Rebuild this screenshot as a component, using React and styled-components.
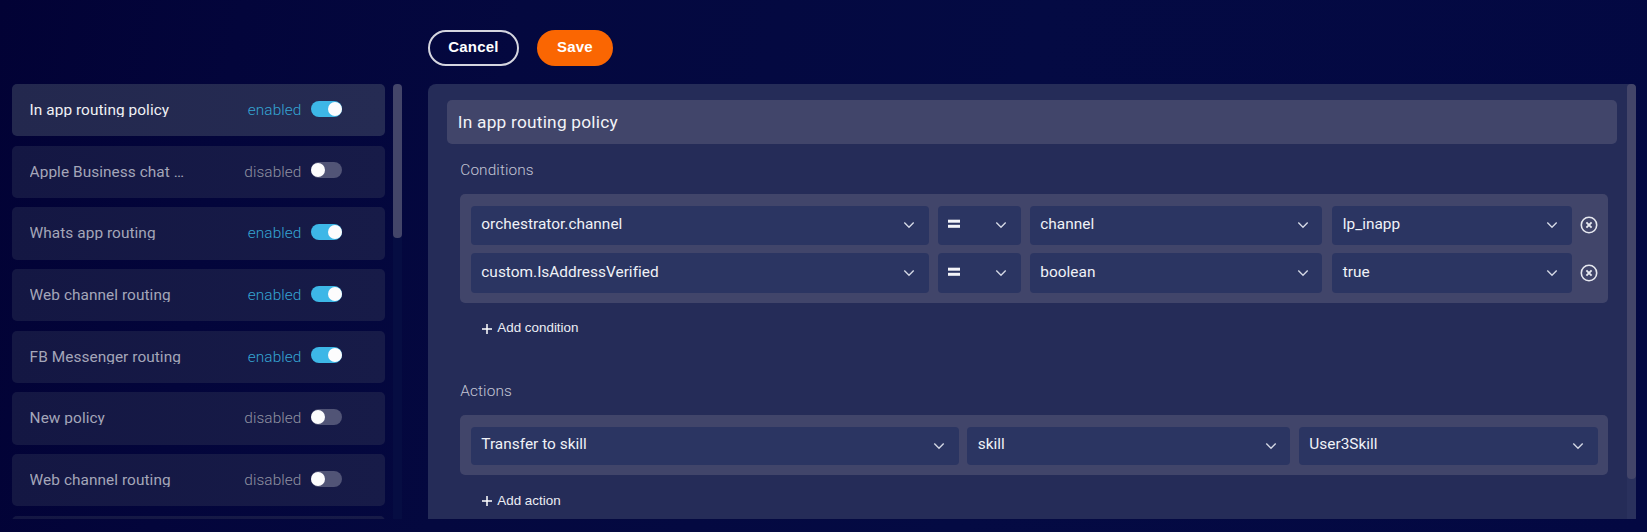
import React from "react";
import styled, { createGlobalStyle } from "styled-components";

const Global = createGlobalStyle`
  *, *::before, *::after { box-sizing: border-box; }
  body { margin: 0; background: #04083f; }
  button, input { font: inherit; color: inherit; border: 0; background: none; padding: 0; margin: 0; }
`;

const Page = styled.main`
  display: grid;
  grid-template-columns: 390px 1207.5px;
  column-gap: 26px;
  width: 1647px;
  height: 532px;
  padding: 30px 11px 13px 12px;
  overflow: hidden;
  background: linear-gradient(100deg, #020235 0%, #03053b 14%, #04083f 30%, #040a43 60%, #030842 100%);
  color: #fff;
  font-family: Roboto, "Liberation Sans", sans-serif;
`;

const Sidebar = styled.aside`
  display: flex;
  justify-content: space-between;
  height: 435px;
  margin-top: 54px;
`;

const PolicyList = styled.div`
  display: flex;
  flex-direction: column;
  gap: 9.5px;
  width: 373.3px;
  overflow: hidden;
`;

const PolicyRow = styled.div`
  display: flex;
  flex: none;
  align-items: flex-start;
  height: 52.2px;
  padding: 16px 43.8px 0 17.6px;
  border-radius: 5px;
  background: ${(p) => (p.$active ? "linear-gradient(90deg, #23284e, #252b53)" : "linear-gradient(90deg, #141743, #171b48)")};
`;

const PolicyName = styled.span`
  width: 180px;
  height: 17px;
  overflow: hidden;
  white-space: nowrap;
  font-size: 15.4px;
  line-height: 21px;
  letter-spacing: 0.06px;
  color: ${(p) => (p.$active ? "#f0f1f5" : "#a4a6b9")};
`;

const PolicyState = styled.span`
  flex: 1;
  margin-right: 9.5px;
  text-align: right;
  font-size: 15.4px;
  font-weight: 300;
  line-height: 21px;
  letter-spacing: 0.08px;
  color: ${(p) => (p.$on ? "#35a5d4" : "#8f91a1")};
`;

const Toggle = styled.span`
  display: flex;
  align-items: center;
  justify-content: ${(p) => (p.$on ? "flex-end" : "flex-start")};
  width: 30.5px;
  height: 16px;
  margin-top: 0.5px;
  border-radius: 8px;
  background: ${(p) => (p.$on ? "#3db7e7" : "#515476")};
  &::after {
    content: "";
    width: 14px;
    height: 14px;
    border-radius: 50%;
    background: #fcfcfd;
  }
`;

const Track = styled.div`
  width: 8.7px;
  height: 100%;
  border-radius: 4px 4px 0 0;
  background: ${(p) => p.$tone};
`;

const Thumb = styled.div`
  height: ${(p) => p.$size}px;
  border-radius: 4px;
  background: #434569;
`;

const Editor = styled.section`
  display: flex;
  flex-direction: column;
`;

const Toolbar = styled.div`
  display: flex;
  gap: 18px;
  height: 54px;
`;

const PillButton = styled.button`
  width: ${(p) => (p.$primary ? 76 : 91)}px;
  height: 35.5px;
  padding-bottom: 3px !important;
  border: ${(p) => (p.$primary ? "0" : "2px solid #d5d6df")} !important;
  border-radius: 18px;
  background: ${(p) => (p.$primary ? "#fa6602" : "transparent")} !important;
  font: bold 15px/1 "Liberation Sans", Arial, sans-serif !important;
  letter-spacing: 0.2px;
`;

const Panel = styled.div`
  display: flex;
  justify-content: space-between;
  height: 435px;
  overflow: hidden;
  border-radius: 8px 4px 0 0;
  background: #252c58;
`;

const PanelBody = styled.div`
  width: 1189px;
  padding: 16px 0 0 18.8px;
`;

const TitleInput = styled.input.attrs({ type: "text" })`
  display: block;
  width: 1170px;
  height: 44px;
  padding: 0 11px 1px !important;
  border-radius: 5px;
  background: #41456a !important;
  color: #f2f3f7 !important;
  font-size: 17.3px !important;
  letter-spacing: 0.23px;
`;

const Block = styled.div`
  width: 1148px;
  margin-left: 13.5px;
  padding-top: ${(p) => p.$top}px;
`;

const BlockLabel = styled.h2`
  margin: 0 0 ${(p) => p.$below}px;
  font-size: 15.4px;
  font-weight: 300;
  line-height: 20px;
  letter-spacing: 0.1px;
  color: #c3c5d5;
`;

const Group = styled.div`
  display: flex;
  flex-direction: column;
  gap: 8.5px;
  padding: 12px 10.5px 10px;
  border-radius: 5px;
  background: #41456a;
`;

const Rule = styled.div`
  display: grid;
  grid-template-columns: ${(p) => p.$columns};
  align-items: center;
  height: ${(p) => p.$height}px;
`;

const SelectBox = styled.div`
  display: flex;
  align-items: center;
  justify-content: space-between;
  height: 100%;
  padding: 0 13.8px 0 10.5px;
  border-radius: 4px;
  background: #2b3562;
  color: #f0f2f7;
  font-size: 15.4px;
  letter-spacing: 0.02px;
`;

const SelectValue = styled.span`
  padding-bottom: 3px;
`;

const RemoveButton = styled.button`
  display: flex;
  justify-self: center;
`;

const AddButton = styled.button`
  display: flex;
  align-items: center;
  gap: 5.5px;
  height: 20px;
  margin: ${(p) => p.$top}px 0 0 21.5px !important;
  font: 13.4px/20px "Liberation Sans", Arial, sans-serif !important;
  color: #eceef4 !important;
`;

const Chevron = () => (
  <svg width="12" height="8" viewBox="0 0 12 8" fill="none" stroke="#d3d7e4" strokeWidth="1.4">
    <path d="M1.3 1.6 6 6.2l4.7-4.6" />
  </svg>
);

const Equals = () => (
  <svg width="12" height="10" viewBox="0 0 12 10" fill="#f3f4f8">
    <rect y="0.7" width="12" height="3" />
    <rect y="5.8" width="12" height="3" />
  </svg>
);

const Remove = () => (
  <svg width="18" height="18" viewBox="0 0 18 18" fill="none" stroke="#e6e8ef">
    <circle cx="9" cy="9" r="7.7" strokeWidth="1.6" />
    <path d="m6.4 6.4 5.2 5.2m0-5.2-5.2 5.2" strokeWidth="1.9" />
  </svg>
);

const PlusMark = styled.svg`
  margin-top: 1px;
`;

const Plus = () => (
  <PlusMark width="10" height="10" viewBox="0 0 10 10" stroke="#fff" strokeWidth="1.5">
    <path d="M5 0v10M0 5h10" />
  </PlusMark>
);

const Select = ({ children }) => (
  <SelectBox>
    <SelectValue>{children}</SelectValue>
    <Chevron />
  </SelectBox>
);

const policies = [
  { name: "In app routing policy", on: true, active: true },
  { name: "Apple Business chat …", on: false },
  { name: "Whats app routing", on: true },
  { name: "Web channel routing", on: true },
  { name: "FB Messenger routing", on: true },
  { name: "New policy", on: false },
  { name: "Web channel routing", on: false },
  { name: "", on: false },
];

const conditions = [
  { field: "orchestrator.channel", type: "channel", value: "lp_inapp", height: 38.5 },
  { field: "custom.IsAddressVerified", type: "boolean", value: "true", height: 40 },
];

export default function App() {
  return (
    <>
      <Global />
      <Page>
        <Sidebar>
          <PolicyList>
            {policies.map((p, i) => (
              <PolicyRow key={i} $active={p.active}>
                {p.name && (
                  <>
                    <PolicyName $active={p.active}>{p.name}</PolicyName>
                    <PolicyState $on={p.on}>{p.on ? "enabled" : "disabled"}</PolicyState>
                    <Toggle $on={p.on} />
                  </>
                )}
              </PolicyRow>
            ))}
          </PolicyList>
          <Track $tone="#060d42">
            <Thumb $size={153.5} />
          </Track>
        </Sidebar>
        <Editor>
          <Toolbar>
            <PillButton>Cancel</PillButton>
            <PillButton $primary>Save</PillButton>
          </Toolbar>
          <Panel>
            <PanelBody>
              <TitleInput defaultValue="In app routing policy" />
              <Block $top={16}>
                <BlockLabel $below={14}>Conditions</BlockLabel>
                <Group>
                  {conditions.map((c) => (
                    <Rule key={c.field} $height={c.height} $columns="458px 9px 83px 9px 292.5px 10px 239.5px 34px">
                      <Select>{c.field}</Select>
                      <span />
                      <Select><Equals /></Select>
                      <span />
                      <Select>{c.type}</Select>
                      <span />
                      <Select>{c.value}</Select>
                      <RemoveButton aria-label="Remove condition"><Remove /></RemoveButton>
                    </Rule>
                  ))}
                </Group>
                <AddButton $top={15}><Plus />Add condition</AddButton>
              </Block>
              <Block $top={42.5}>
                <BlockLabel $below={14}>Actions</BlockLabel>
                <Group>
                  <Rule $height={38.5} $columns="488px 8.5px 323px 8.5px 299px">
                    <Select>Transfer to skill</Select>
                    <span />
                    <Select>skill</Select>
                    <span />
                    <Select>User3Skill</Select>
                  </Rule>
                </Group>
                <AddButton $top={15.5}><Plus />Add action</AddButton>
              </Block>
            </PanelBody>
            <Track $tone="#2a315d">
              <Thumb $size={394.6} />
            </Track>
          </Panel>
        </Editor>
      </Page>
    </>
  );
}
